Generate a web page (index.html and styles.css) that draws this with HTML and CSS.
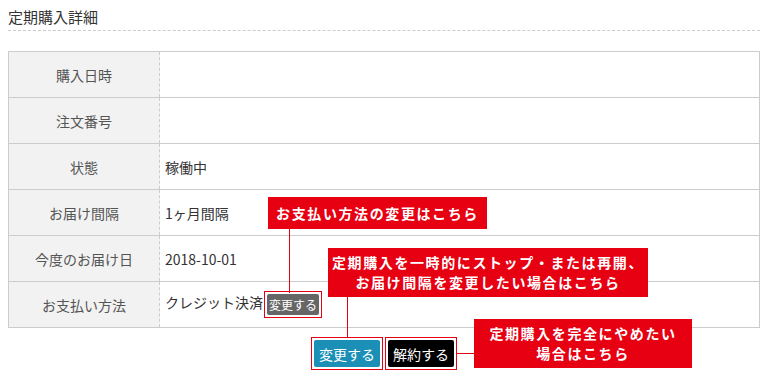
FILE: index.html
```html
<!DOCTYPE html>
<html lang="ja">
<head>
  <meta charset="UTF-8">
  <meta name="viewport" content="width=device-width, initial-scale=1.0">
  <title>定期購入詳細</title>
  <link rel="stylesheet" href="styles.css">
</head>
<body>
  <div class="page">

    <h2 class="title">定期購入詳細</h2>

    <table class="detail">
      <tr>
        <th>購入日時</th>
        <td></td>
      </tr>
      <tr>
        <th>注文番号</th>
        <td></td>
      </tr>
      <tr>
        <th>状態</th>
        <td>稼働中</td>
      </tr>
      <tr>
        <th>お届け間隔</th>
        <td>1ヶ月間隔</td>
      </tr>
      <tr>
        <th>今度のお届け日</th>
        <td>2018-10-01</td>
      </tr>
      <tr>
        <th>お支払い方法</th>
        <td>クレジット決済<span class="mark mark-small"><button class="btn-small">変更する</button></span></td>
      </tr>
    </table>

    <div class="actions">
      <span class="mark"><button class="btn btn-change">変更する</button></span>
      <span class="mark"><button class="btn btn-cancel">解約する</button></span>
    </div>

    <!-- annotations -->
    <div class="note note-pay">お支払い方法の変更はこちら</div>
    <div class="line line-pay"></div>

    <div class="note note-change">定期購入を一時的にストップ・または再開、<br>お届け間隔を変更したい場合はこちら</div>
    <div class="line line-change"></div>

    <div class="note note-cancel">定期購入を完全にやめたい<br>場合はこちら</div>
    <div class="line line-cancel"></div>

  </div>
</body>
</html>
```

FILE: styles.css
```css
body {
  margin: 0;
  font-family: "Noto Sans CJK JP", "Noto Sans", sans-serif;
  color: #333;
  background: #fff;
}

.page {
  position: relative;
  padding: 0 8px;
  height: 376px;
}

.title {
  margin: 0;
  padding: 6px 0 2px;
  font-size: 15px;
  line-height: 22px;
  font-weight: normal;
  color: #333;
  border-bottom: 1px dashed #ccc;
}

.detail {
  width: 100%;
  margin-top: 20px;
  border-collapse: collapse;
  border: 1px solid #ccc;
  font-size: 14px;
}

.detail tr {
  height: 46px;
  border-bottom: 1px solid #ccc;
}

.detail th {
  width: 150px;
  padding: 0;
  font-weight: normal;
  color: #555;
  background: #f2f2f2;
  text-align: center;
  border-right: 1px dashed #ccc;
}

.detail td {
  padding: 0 5px;
  color: #333;
}

/* red highlight frame */
.mark {
  display: inline-flex;
  padding: 2px;
  border: 1px solid #e60012;
}

.mark-small {
  margin-left: 1px;
  vertical-align: middle;
}

.btn-small {
  padding: 0 2px;
  height: 21px;
  font-family: inherit;
  font-size: 12px;
  color: #fff;
  background: #666;
  border: none;
  border-radius: 2px;
}

.actions {
  display: flex;
  justify-content: center;
  gap: 2px;
  margin-top: 9px;
}

.btn {
  height: 27px;
  padding: 0 5px;
  font-family: inherit;
  font-size: 14px;
  color: #fff;
  border: none;
  border-radius: 2px;
}

.btn-change {
  background: #1b8fb6;
}

.btn-cancel {
  background: #000;
}

.note {
  position: absolute;
  background: #e60012;
  color: #fff;
  font-weight: bold;
  font-size: 14px;
  line-height: 20px;
  letter-spacing: 1.6px;
  text-align: center;
  white-space: nowrap;
}

.note-pay {
  left: 268px;
  top: 197px;
  width: 219px;
  height: 32px;
  line-height: 32px;
}

.note-change {
  left: 328px;
  top: 248px;
  width: 320px;
  height: 49px;
  padding-top: 4px;
  box-sizing: border-box;
}

.note-cancel {
  left: 474px;
  top: 319px;
  width: 218px;
  height: 49px;
  padding-top: 4px;
  box-sizing: border-box;
}

.line {
  position: absolute;
  background: #e60012;
}

.line-pay {
  left: 289px;
  top: 229px;
  width: 1px;
  height: 64px;
}

.line-change {
  left: 347px;
  top: 297px;
  width: 1px;
  height: 40px;
}

.line-cancel {
  left: 457px;
  top: 353px;
  width: 17px;
  height: 1px;
}
```
